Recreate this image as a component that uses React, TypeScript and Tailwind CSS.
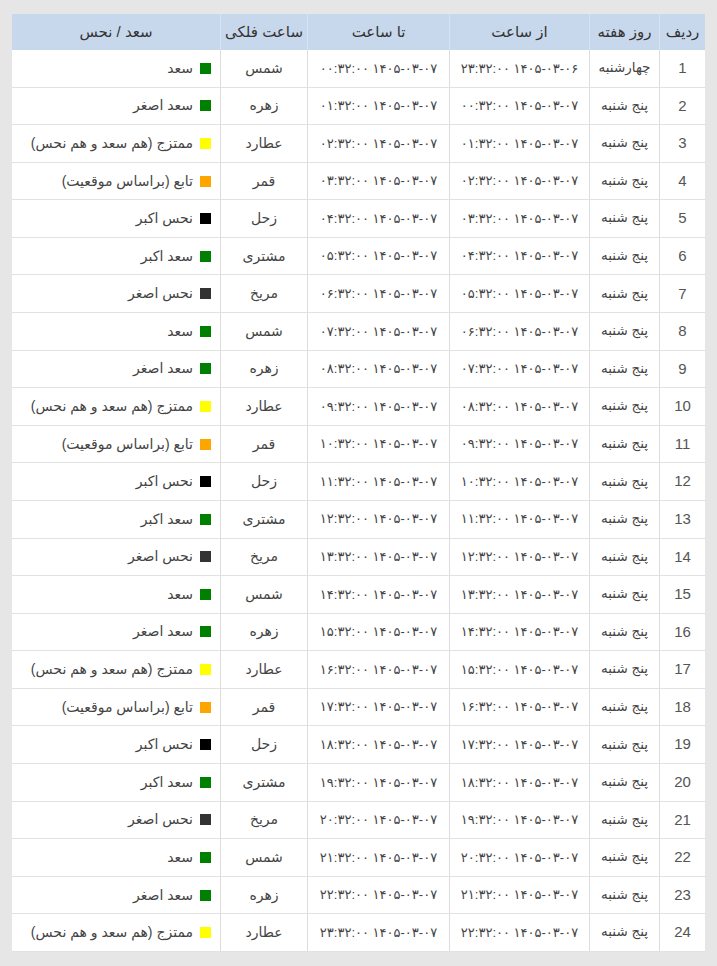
const planets = [
  { name: 'شمس', label: 'سعد', color: 'bg-[#008000]' },
  { name: 'زهره', label: 'سعد اصغر', color: 'bg-[#008000]' },
  { name: 'عطارد', label: 'ممتزج (هم سعد و هم نحس)', color: 'bg-[#ffff00]' },
  { name: 'قمر', label: 'تابع (براساس موقعیت)', color: 'bg-[#ffa500]' },
  { name: 'زحل', label: 'نحس اکبر', color: 'bg-[#000000]' },
  { name: 'مشتری', label: 'سعد اکبر', color: 'bg-[#008000]' },
  { name: 'مریخ', label: 'نحس اصغر', color: 'bg-[#333333]' },
];

const fa = (s: string) => s.replace(/\d/g, (d) => '۰۱۲۳۴۵۶۷۸۹'[Number(d)]);
const pad = (n: number) => String(n).padStart(2, '0');

const rows = Array.from({ length: 24 }, (_, i) => {
  const fromHour = (i + 23) % 24;
  const fromDate = i === 0 ? '1405-03-06' : '1405-03-07';
  return {
    id: i + 1,
    day: i === 0 ? 'چهارشنبه' : 'پنج شنبه',
    from: fa(`${fromDate} ${pad(fromHour)}:32:00`),
    to: fa(`1405-03-07 ${pad(i)}:32:00`),
    planet: planets[i % 7],
  };
});

const cols = 'grid grid-cols-[46px_70px_140px_142px_87px_208px]';
const cell = 'flex items-center justify-center border-l border-[#dddddd] last:border-l-0';

export default function App() {
  return (
    <div
      dir="rtl"
      className="min-h-[966px] bg-[#e6e6e6] pt-[14px] pr-[12px] text-[#444444]"
      style={{ fontFamily: '"Liberation Sans", "DejaVu Sans", sans-serif' }}
    >
      <div className="w-[693px] bg-white">
        {/* Header */}
        <div className={`${cols} h-[36px] bg-[#c8d8ec] text-[15px] text-[#333333]`}>
          {['ردیف', 'روز هفته', 'از ساعت', 'تا ساعت', 'ساعت فلکی', 'سعد / نحس'].map((h) => (
            <div key={h} className="flex items-center justify-center border-l border-[#d8e3f1] last:border-l-0">
              {h}
            </div>
          ))}
        </div>

        {/* Body */}
        {rows.map((r) => (
          <div key={r.id} className={`${cols} h-[37.58px] border-b border-[#e2e2e2] text-[14px]`}>
            <div className={`${cell} text-[15px] text-[#555555]`}>{r.id}</div>
            <div className={`${cell} text-[13.5px]`}>{r.day}</div>
            <div className={`${cell} text-[13px]`}>{r.from}</div>
            <div className={`${cell} text-[13px]`}>{r.to}</div>
            <div className={cell}>{r.planet.name}</div>
            <div className="flex items-center gap-[7px] pr-[9px]">
              <span className={`inline-block h-[11px] w-[11px] shrink-0 ${r.planet.color}`} />
              <span>{r.planet.label}</span>
            </div>
          </div>
        ))}
      </div>
    </div>
  );
}
